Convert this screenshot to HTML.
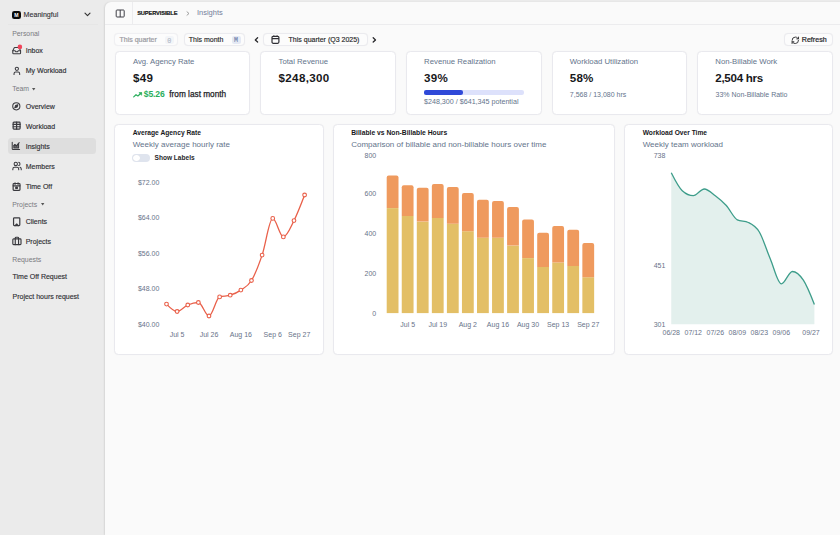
<!DOCTYPE html>
<html><head><meta charset="utf-8"><title>Insights</title>
<style>
html,body{margin:0;padding:0;width:840px;height:535px;overflow:hidden;background:#ebebeb;}
body{position:relative;font-family:"Liberation Sans", sans-serif;}
.t{position:absolute;white-space:nowrap;font-family:"Liberation Sans", sans-serif;}
</style></head><body>
<div style="position:absolute;left:0.00px;top:0.00px;width:840.00px;height:535.00px;background:#ebebeb"></div>
<div style="position:absolute;left:12.20px;top:10.50px;width:8.60px;height:8.60px;background:#0a0a0a;border-radius:2.3px"></div>
<div class="t" style="top:13.00px;font-size:5.2px;line-height:5.2px;color:#fff;font-weight:700;left:16.50px;transform:translateX(-50%);">M</div>
<div class="t" style="top:12.00px;font-size:7.1px;line-height:7.1px;color:#333338;font-weight:400;-webkit-text-stroke:0.12px #333338;left:23.60px;">Meaningful</div>
<svg style="position:absolute;left:84px;top:12px;overflow:visible;" width="7" height="5" viewBox="0 0 7 5"><path d="M1 1.2 L3.5 3.7 L6 1.2" fill="none" stroke="#333" stroke-width="1.15" stroke-linecap="round" stroke-linejoin="round"/></svg>
<div style="position:absolute;left:8.00px;top:24.20px;width:90.00px;height:0.60px;background:#e6e6e6"></div>
<div class="t" style="top:31.00px;font-size:6.9px;line-height:6.9px;color:#7a7a80;font-weight:400;left:12.20px;">Personal</div>
<div class="t" style="top:86.00px;font-size:6.9px;line-height:6.9px;color:#7a7a80;font-weight:400;left:12.20px;">Team</div>
<div class="t" style="top:202.00px;font-size:6.9px;line-height:6.9px;color:#7a7a80;font-weight:400;left:12.20px;">Projects</div>
<div class="t" style="top:257.00px;font-size:6.9px;line-height:6.9px;color:#7a7a80;font-weight:400;left:12.20px;">Requests</div>
<svg style="position:absolute;left:32.0px;top:87.8px;overflow:visible;" width="4" height="3" viewBox="0 0 4 3"><path d="M0 0 L3.4 0 L1.7 2.4 Z" fill="#555"/></svg>
<svg style="position:absolute;left:40.7px;top:202.8px;overflow:visible;" width="4" height="3" viewBox="0 0 4 3"><path d="M0 0 L3.4 0 L1.7 2.4 Z" fill="#555"/></svg>
<div style="position:absolute;left:8.20px;top:137.60px;width:87.80px;height:16.90px;background:#dedede;border-radius:3.5px"></div>
<div class="t" style="top:47.00px;font-size:7.0px;line-height:7.0px;color:#2e2e33;font-weight:400;-webkit-text-stroke:0.14px #2e2e33;left:25.70px;">Inbox</div>
<div class="t" style="top:67.00px;font-size:7.0px;line-height:7.0px;color:#2e2e33;font-weight:400;-webkit-text-stroke:0.14px #2e2e33;left:25.70px;">My Workload</div>
<div class="t" style="top:103.00px;font-size:7.0px;line-height:7.0px;color:#2e2e33;font-weight:400;-webkit-text-stroke:0.14px #2e2e33;left:25.70px;">Overview</div>
<div class="t" style="top:123.00px;font-size:7.0px;line-height:7.0px;color:#2e2e33;font-weight:400;-webkit-text-stroke:0.14px #2e2e33;left:25.70px;">Workload</div>
<div class="t" style="top:143.00px;font-size:7.0px;line-height:7.0px;color:#2e2e33;font-weight:400;-webkit-text-stroke:0.14px #2e2e33;left:25.70px;">Insights</div>
<div class="t" style="top:163.00px;font-size:7.0px;line-height:7.0px;color:#2e2e33;font-weight:400;-webkit-text-stroke:0.14px #2e2e33;left:25.70px;">Members</div>
<div class="t" style="top:183.00px;font-size:7.0px;line-height:7.0px;color:#2e2e33;font-weight:400;-webkit-text-stroke:0.14px #2e2e33;left:25.70px;">Time Off</div>
<div class="t" style="top:218.00px;font-size:7.0px;line-height:7.0px;color:#2e2e33;font-weight:400;-webkit-text-stroke:0.14px #2e2e33;left:25.70px;">Clients</div>
<div class="t" style="top:238.00px;font-size:7.0px;line-height:7.0px;color:#2e2e33;font-weight:400;-webkit-text-stroke:0.14px #2e2e33;left:25.70px;">Projects</div>
<div class="t" style="top:273.00px;font-size:7.0px;line-height:7.0px;color:#2e2e33;font-weight:400;-webkit-text-stroke:0.14px #2e2e33;left:12.50px;">Time Off Request</div>
<div class="t" style="top:293.00px;font-size:7.0px;line-height:7.0px;color:#2e2e33;font-weight:400;-webkit-text-stroke:0.14px #2e2e33;left:12.50px;">Project hours request</div>
<svg style="position:absolute;left:12.02px;top:46.32px;overflow:visible" width="9.36" height="9.36" viewBox="0 0 24 24"><g fill="none" stroke="#3a3a3f" stroke-linecap="round" stroke-linejoin="round" stroke-width="2.69"><polyline points="22 12 16 12 14 15 10 15 8 12 2 12"/><path d="M5.45 5.11 2 12v6a2 2 0 0 0 2 2h16a2 2 0 0 0 2-2v-6l-3.45-6.89A2 2 0 0 0 16.76 4H7.24a2 2 0 0 0-1.79 1.11z"/></g></svg>
<svg style="position:absolute;left:16.5px;top:43.7px" width="6" height="6"><circle cx="2.9" cy="2.9" r="2.3" fill="#f0445a"/></svg>
<svg style="position:absolute;left:11.74px;top:65.84px;overflow:visible" width="9.72" height="9.72" viewBox="0 0 24 24"><g fill="none" stroke="#3a3a3f" stroke-linecap="round" stroke-linejoin="round" stroke-width="2.59"><circle cx="12" cy="7" r="4"/><path d="M19 21v-2a4 4 0 0 0-4-4H9a4 4 0 0 0-4 4v2"/></g></svg>
<svg style="position:absolute;left:12.18px;top:101.88px;overflow:visible" width="8.64" height="8.64" viewBox="0 0 24 24"><g fill="none" stroke="#3a3a3f" stroke-linecap="round" stroke-linejoin="round" stroke-width="2.92"><circle cx="12" cy="12" r="10"/><polygon points="16.24 7.76 14.12 14.12 7.76 16.24 9.88 9.88 16.24 7.76" fill="#3a3a3f"/></g></svg>
<svg style="position:absolute;left:11.98px;top:121.38px;overflow:visible" width="9.24" height="9.24" viewBox="0 0 24 24"><g fill="none" stroke="#3a3a3f" stroke-linecap="round" stroke-linejoin="round" stroke-width="3.12"><rect x="3" y="3" width="18" height="18" rx="2"/><path d="M3 9h18M3 15h18M12 3v18"/></g></svg>
<svg style="position:absolute;left:11.48px;top:141.28px;overflow:visible" width="9.84" height="9.84" viewBox="0 0 24 24"><g fill="none" stroke="#3a3a3f" stroke-linecap="round" stroke-linejoin="round" stroke-width="2.56"><path d="M3 3v16a2 2 0 0 0 2 2h16"/><path d="M7 11.2 9.5 8.7 13 12.2 18.5 6.7V17H7z" fill="#3a3a3f" fill-opacity="0.7"/><path d="M7 11.2 9.5 8.7 13 12.2 20 4"/></g></svg>
<svg style="position:absolute;left:11.56px;top:160.76px;overflow:visible" width="10.08" height="10.08" viewBox="0 0 24 24"><g fill="none" stroke="#3a3a3f" stroke-linecap="round" stroke-linejoin="round" stroke-width="2.50"><path d="M16 21v-2a4 4 0 0 0-4-4H6a4 4 0 0 0-4 4v2"/><circle cx="9" cy="7" r="4"/><path d="M22 21v-2a4 4 0 0 0-3-3.87"/><path d="M16 3.13a4 4 0 0 1 0 7.75"/></g></svg>
<svg style="position:absolute;left:11.94px;top:181.64px;overflow:visible" width="9.12" height="9.12" viewBox="0 0 24 24"><g fill="none" stroke="#3a3a3f" stroke-linecap="round" stroke-linejoin="round" stroke-width="3.16"><rect x="3" y="4" width="18" height="18" rx="2"/><path d="M16 2v4M8 2v4M3 10h18"/><rect x="10" y="13.5" width="4" height="3.5" fill="#3a3a3f"/></g></svg>
<svg style="position:absolute;left:11.92px;top:216.62px;overflow:visible" width="9.36" height="9.36" viewBox="0 0 24 24"><g fill="none" stroke="#3a3a3f" stroke-linecap="round" stroke-linejoin="round" stroke-width="3.08"><rect x="4" y="2" width="16" height="20" rx="2"/><path d="M8 22 12 18 16 22"/></g></svg>
<svg style="position:absolute;left:11.58px;top:236.08px;overflow:visible" width="9.84" height="9.84" viewBox="0 0 24 24"><g fill="none" stroke="#3a3a3f" stroke-linecap="round" stroke-linejoin="round" stroke-width="2.80"><rect x="2" y="7" width="20" height="14" rx="2"/><path d="M16 21V5a2 2 0 0 0-2-2h-4a2 2 0 0 0-2 2v16"/></g></svg>
<div style="position:absolute;left:105.00px;top:2.00px;width:735.00px;height:533.00px;background:#fafafa;border-top-left-radius:6px;box-shadow:-0.3px 0 1.6px rgba(0,0,0,0.09)"></div>
<div style="position:absolute;left:105.00px;top:23.60px;width:735.00px;height:0.80px;background:#ececee"></div>
<div style="position:absolute;left:131.60px;top:2.00px;width:0.80px;height:22.00px;background:#ececee"></div>
<svg style="position:absolute;left:114.5px;top:8.5px;overflow:visible;" width="11" height="9" viewBox="0 0 11 9"><rect x="1.2" y="1.0" width="8.0" height="7.0" rx="0.8" fill="none" stroke="#3f3f46" stroke-width="1.0"/><path d="M5.2 1 V8" stroke="#3f3f46" stroke-width="1.0"/></svg>
<div class="t" style="top:11.00px;font-size:5.7px;line-height:5.7px;color:#111;font-weight:700;letter-spacing:-0.12px;-webkit-text-stroke:0.15px #111;left:137.20px;">SUPERVISIBLE</div>
<svg style="position:absolute;left:185.5px;top:10.5px;overflow:visible;" width="4" height="5" viewBox="0 0 4 5"><path d="M1 0.8 L3 2.5 L1 4.2" fill="none" stroke="#888" stroke-width="0.8" stroke-linecap="round"/></svg>
<div class="t" style="top:9.00px;font-size:7.5px;line-height:7.5px;color:#74809a;font-weight:400;left:196.90px;">Insights</div>
<div style="position:absolute;left:114.20px;top:33.10px;width:64.00px;height:13.30px;background:#fcfcfc;border:0.8px solid #f0f0f3;border-radius:4px;box-sizing:border-box;box-shadow:0 0 1px rgba(0,0,0,0.05)"></div>
<div class="t" style="top:36.00px;font-size:7px;line-height:7px;color:#9b9ba3;font-weight:400;-webkit-text-stroke:0.2px #9b9ba3;left:119.50px;">This quarter</div>
<div style="position:absolute;left:164.60px;top:35.50px;width:9.40px;height:8.60px;background:#f3f5f8;border-radius:2px"></div>
<div class="t" style="top:38.00px;font-size:6.8px;line-height:6.8px;color:#b0b7c6;font-weight:400;-webkit-text-stroke:0.1px #b0b7c6;left:169.20px;transform:translateX(-50%);font-family:'Liberation Mono',monospace">0</div>
<div style="position:absolute;left:183.50px;top:33.10px;width:61.80px;height:13.30px;background:#fcfcfc;border:0.8px solid #ebebef;border-radius:4px;box-sizing:border-box;box-shadow:0 0 1px rgba(0,0,0,0.05)"></div>
<div class="t" style="top:36.00px;font-size:7px;line-height:7px;color:#27272a;font-weight:400;-webkit-text-stroke:0.14px #27272a;left:188.80px;">This month</div>
<div style="position:absolute;left:231.50px;top:35.50px;width:9.40px;height:8.60px;background:#e4e9f4;border-radius:2px"></div>
<div class="t" style="top:38.00px;font-size:6.6px;line-height:6.6px;color:#7384aa;font-weight:400;-webkit-text-stroke:0.15px #7384aa;left:236.10px;transform:translateX(-50%);font-family:'Liberation Mono',monospace">M</div>
<svg style="position:absolute;left:254.3px;top:37px;overflow:visible;" width="5" height="6" viewBox="0 0 5 6"><path d="M3.6 0.8 L1.3 2.9 L3.6 5" fill="none" stroke="#27272a" stroke-width="1.3" stroke-linecap="round" stroke-linejoin="round"/></svg>
<div style="position:absolute;left:262.80px;top:33.10px;width:105.10px;height:13.30px;background:#fcfcfc;border:0.8px solid #ebebef;border-radius:4px;box-sizing:border-box;box-shadow:0 0 1px rgba(0,0,0,0.05)"></div>
<svg style="position:absolute;left:270.5px;top:35.2px;overflow:visible;" width="9" height="9" viewBox="0 0 9 9"><rect x="1" y="1.4" width="6.9" height="6.9" rx="1.2" fill="none" stroke="#303036" stroke-width="1.2"/><path d="M1 3.7 H7.9 M2.8 0.4 V2 M6.1 0.4 V2" stroke="#303036" stroke-width="1.2"/></svg>
<div class="t" style="top:36.00px;font-size:7px;line-height:7px;color:#27272a;font-weight:400;-webkit-text-stroke:0.15px #27272a;left:288.60px;">This quarter (Q3 2025)</div>
<svg style="position:absolute;left:371.5px;top:37px;overflow:visible;" width="5" height="6" viewBox="0 0 5 6"><path d="M1.2 0.8 L3.5 2.9 L1.2 5" fill="none" stroke="#27272a" stroke-width="1.3" stroke-linecap="round" stroke-linejoin="round"/></svg>
<div style="position:absolute;left:784.20px;top:33.10px;width:49.00px;height:13.30px;background:#fcfcfc;border:0.8px solid #ebebef;border-radius:4px;box-sizing:border-box;box-shadow:0 0 1px rgba(0,0,0,0.05)"></div>
<svg style="position:absolute;left:791.0px;top:35.6px;overflow:visible" width="8.6" height="8.6" viewBox="0 0 24 24"><g fill="none" stroke="#27272a" stroke-width="2.5" stroke-linecap="round" stroke-linejoin="round"><path d="M3 12a9 9 0 0 1 9-9 9.75 9.75 0 0 1 6.74 2.74L21 8"/><path d="M21 3v5h-5"/><path d="M21 12a9 9 0 0 1-9 9 9.75 9.75 0 0 1-6.74-2.74L3 16"/><path d="M8 16H3v5"/></g></svg>
<div class="t" style="top:37.00px;font-size:7.1px;line-height:7.1px;color:#27272a;font-weight:400;-webkit-text-stroke:0.22px #27272a;left:801.80px;">Refresh</div>
<div style="position:absolute;left:114.60px;top:51.20px;width:135.80px;height:63.60px;background:#fff;border:0.9px solid #e9e9ee;border-radius:4.5px;box-sizing:border-box;box-shadow:0 0 1.2px rgba(0,0,0,0.05)"></div>
<div style="position:absolute;left:260.30px;top:51.20px;width:135.80px;height:63.60px;background:#fff;border:0.9px solid #e9e9ee;border-radius:4.5px;box-sizing:border-box;box-shadow:0 0 1.2px rgba(0,0,0,0.05)"></div>
<div style="position:absolute;left:405.90px;top:51.20px;width:135.80px;height:63.60px;background:#fff;border:0.9px solid #e9e9ee;border-radius:4.5px;box-sizing:border-box;box-shadow:0 0 1.2px rgba(0,0,0,0.05)"></div>
<div style="position:absolute;left:551.60px;top:51.20px;width:135.80px;height:63.60px;background:#fff;border:0.9px solid #e9e9ee;border-radius:4.5px;box-sizing:border-box;box-shadow:0 0 1.2px rgba(0,0,0,0.05)"></div>
<div style="position:absolute;left:697.30px;top:51.20px;width:135.80px;height:63.60px;background:#fff;border:0.9px solid #e9e9ee;border-radius:4.5px;box-sizing:border-box;box-shadow:0 0 1.2px rgba(0,0,0,0.05)"></div>
<div class="t" style="top:58.00px;font-size:7.75px;line-height:7.75px;color:#64748b;font-weight:400;left:132.90px;">Avg. Agency Rate</div>
<div class="t" style="top:72.00px;font-size:11.6px;line-height:11.6px;color:#18181b;font-weight:700;letter-spacing:0.35px;left:132.90px;">$49</div>
<div class="t" style="top:58.00px;font-size:7.75px;line-height:7.75px;color:#64748b;font-weight:400;left:278.50px;">Total Revenue</div>
<div class="t" style="top:72.00px;font-size:11.6px;line-height:11.6px;color:#18181b;font-weight:700;letter-spacing:0.35px;left:278.50px;">$248,300</div>
<div class="t" style="top:58.00px;font-size:7.75px;line-height:7.75px;color:#64748b;font-weight:400;left:424.10px;">Revenue Realization</div>
<div class="t" style="top:72.00px;font-size:11.6px;line-height:11.6px;color:#18181b;font-weight:700;letter-spacing:0.25px;left:424.10px;">39%</div>
<div class="t" style="top:58.00px;font-size:7.75px;line-height:7.75px;color:#64748b;font-weight:400;left:569.70px;">Workload Utilization</div>
<div class="t" style="top:72.00px;font-size:11.6px;line-height:11.6px;color:#18181b;font-weight:700;letter-spacing:0.25px;left:569.70px;">58%</div>
<div class="t" style="top:58.00px;font-size:7.75px;line-height:7.75px;color:#64748b;font-weight:400;left:715.30px;">Non-Billable Work</div>
<div class="t" style="top:72.00px;font-size:11.6px;line-height:11.6px;color:#18181b;font-weight:700;letter-spacing:-0.3px;left:715.30px;">2,504 hrs</div>
<svg style="position:absolute;left:132.5px;top:92px;overflow:visible;" width="10" height="6" viewBox="0 0 10 6"><path d="M0.7 4.9 L3.0 2.7 L4.9 4.0 L8.2 1.0" fill="none" stroke="#2aae5c" stroke-width="1.2" stroke-linecap="round" stroke-linejoin="round"/><path d="M5.9 0.6 H8.7 V3.3 Z" fill="#2aae5c" stroke="#2aae5c" stroke-width="0.6" stroke-linejoin="round"/></svg>
<div class="t" style="top:90.00px;font-size:8.6px;line-height:8.6px;color:#2aae5c;font-weight:700;letter-spacing:-0.15px;left:143.80px;">$5.26</div>
<div class="t" style="top:91.00px;font-size:8.25px;line-height:8.25px;color:#222226;font-weight:400;-webkit-text-stroke:0.25px #222226;left:169.30px;">from last month</div>
<div style="position:absolute;left:424.00px;top:90.40px;width:100.00px;height:4.20px;background:#dde1fb;border-radius:2.1px"></div>
<div style="position:absolute;left:424.00px;top:90.40px;width:39.00px;height:4.20px;background:#2f49d8;border-radius:2.1px"></div>
<div class="t" style="top:99.00px;font-size:7.15px;line-height:7.15px;color:#64748b;font-weight:400;left:424.00px;">$248,300 / $641,345 potential</div>
<div class="t" style="top:91.00px;font-size:7px;line-height:7px;color:#64748b;font-weight:400;left:569.80px;">7,568 / 13,080 hrs</div>
<div class="t" style="top:91.00px;font-size:7px;line-height:7px;color:#64748b;font-weight:400;left:715.50px;">33% Non-Billable Ratio</div>
<div style="position:absolute;left:114.30px;top:124.30px;width:209.90px;height:230.50px;background:#fff;border:0.9px solid #e9e9ee;border-radius:4.5px;box-sizing:border-box;box-shadow:0 0 1.2px rgba(0,0,0,0.05)"></div>
<div style="position:absolute;left:333.40px;top:124.30px;width:281.40px;height:230.50px;background:#fff;border:0.9px solid #e9e9ee;border-radius:4.5px;box-sizing:border-box;box-shadow:0 0 1.2px rgba(0,0,0,0.05)"></div>
<div style="position:absolute;left:624.40px;top:124.30px;width:208.80px;height:230.50px;background:#fff;border:0.9px solid #e9e9ee;border-radius:4.5px;box-sizing:border-box;box-shadow:0 0 1.2px rgba(0,0,0,0.05)"></div>
<div class="t" style="top:130.00px;font-size:6.7px;line-height:6.7px;color:#18181b;font-weight:700;left:132.70px;">Average Agency Rate</div>
<div class="t" style="top:141.00px;font-size:8px;line-height:8px;color:#64748b;font-weight:400;left:132.70px;">Weekly average hourly rate</div>
<div style="position:absolute;left:132.30px;top:153.60px;width:17.80px;height:8.30px;background:#dfe4ee;border-radius:4.2px"></div>
<div style="position:absolute;left:133.20px;top:154.50px;width:6.50px;height:6.50px;background:#fff;border-radius:50%;box-shadow:0 0 0.6px rgba(0,0,0,0.15)"></div>
<div class="t" style="top:155.00px;font-size:6.55px;line-height:6.55px;color:#27272a;font-weight:700;left:154.60px;">Show Labels</div>
<div class="t" style="top:130.00px;font-size:6.75px;line-height:6.75px;color:#18181b;font-weight:700;left:351.20px;">Billable vs Non-Billable Hours</div>
<div class="t" style="top:141.00px;font-size:8px;line-height:8px;color:#64748b;font-weight:400;left:351.20px;">Comparison of billable and non-billable hours over time</div>
<div class="t" style="top:130.00px;font-size:6.65px;line-height:6.65px;color:#18181b;font-weight:700;left:642.70px;">Workload Over Time</div>
<div class="t" style="top:141.00px;font-size:8px;line-height:8px;color:#64748b;font-weight:400;left:642.70px;">Weekly team workload</div>
<svg style="position:absolute;left:0px;top:0px;overflow:visible;pointer-events:none" width="840" height="535" viewBox="0 0 840 535"><path d="M166.50,304.10 C170.04,307.80 173.58,311.50 177.12,311.50 C180.66,311.50 184.21,306.50 187.75,305.00 C191.29,303.50 194.83,302.50 198.37,302.50 C201.91,302.50 205.45,316.00 208.99,316.00 C212.53,316.00 216.07,298.03 219.62,296.90 C223.16,295.77 226.70,296.33 230.24,295.20 C233.78,294.07 237.32,292.55 240.86,290.10 C244.40,287.65 247.94,286.33 251.48,280.50 C255.02,274.67 258.57,265.45 262.11,255.10 C265.65,244.75 269.19,218.40 272.73,218.40 C276.27,218.40 279.81,236.90 283.35,236.90 C286.89,236.90 290.44,227.58 293.98,220.60 C297.52,213.62 301.06,204.31 304.60,195.00" fill="none" stroke="#e9604a" stroke-width="1.3"/><circle cx="166.50" cy="304.10" r="1.85" fill="#fff" stroke="#e9604a" stroke-width="1.1"/><circle cx="177.12" cy="311.50" r="1.85" fill="#fff" stroke="#e9604a" stroke-width="1.1"/><circle cx="187.75" cy="305.00" r="1.85" fill="#fff" stroke="#e9604a" stroke-width="1.1"/><circle cx="198.37" cy="302.50" r="1.85" fill="#fff" stroke="#e9604a" stroke-width="1.1"/><circle cx="208.99" cy="316.00" r="1.85" fill="#fff" stroke="#e9604a" stroke-width="1.1"/><circle cx="219.62" cy="296.90" r="1.85" fill="#fff" stroke="#e9604a" stroke-width="1.1"/><circle cx="230.24" cy="295.20" r="1.85" fill="#fff" stroke="#e9604a" stroke-width="1.1"/><circle cx="240.86" cy="290.10" r="1.85" fill="#fff" stroke="#e9604a" stroke-width="1.1"/><circle cx="251.48" cy="280.50" r="1.85" fill="#fff" stroke="#e9604a" stroke-width="1.1"/><circle cx="262.11" cy="255.10" r="1.85" fill="#fff" stroke="#e9604a" stroke-width="1.1"/><circle cx="272.73" cy="218.40" r="1.85" fill="#fff" stroke="#e9604a" stroke-width="1.1"/><circle cx="283.35" cy="236.90" r="1.85" fill="#fff" stroke="#e9604a" stroke-width="1.1"/><circle cx="293.98" cy="220.60" r="1.85" fill="#fff" stroke="#e9604a" stroke-width="1.1"/><circle cx="304.60" cy="195.00" r="1.85" fill="#fff" stroke="#e9604a" stroke-width="1.1"/></svg>
<div class="t" style="top:179.00px;font-size:7px;line-height:7px;color:#687389;font-weight:400;right:680.70px;">$72.00</div>
<div class="t" style="top:214.00px;font-size:7px;line-height:7px;color:#687389;font-weight:400;right:680.70px;">$64.00</div>
<div class="t" style="top:250.00px;font-size:7px;line-height:7px;color:#687389;font-weight:400;right:680.70px;">$56.00</div>
<div class="t" style="top:285.00px;font-size:7px;line-height:7px;color:#687389;font-weight:400;right:680.70px;">$48.00</div>
<div class="t" style="top:321.00px;font-size:7px;line-height:7px;color:#687389;font-weight:400;right:680.70px;">$40.00</div>
<div class="t" style="top:331.00px;font-size:7px;line-height:7px;color:#687389;font-weight:400;left:177.12px;transform:translateX(-50%);">Jul 5</div>
<div class="t" style="top:331.00px;font-size:7px;line-height:7px;color:#687389;font-weight:400;left:208.99px;transform:translateX(-50%);">Jul 26</div>
<div class="t" style="top:331.00px;font-size:7px;line-height:7px;color:#687389;font-weight:400;left:240.86px;transform:translateX(-50%);">Aug 16</div>
<div class="t" style="top:331.00px;font-size:7px;line-height:7px;color:#687389;font-weight:400;left:272.73px;transform:translateX(-50%);">Sep 6</div>
<div class="t" style="top:331.00px;font-size:7px;line-height:7px;color:#687389;font-weight:400;left:299.20px;transform:translateX(-50%);">Sep 27</div>
<svg style="position:absolute;left:0px;top:0px;overflow:visible;pointer-events:none" width="840" height="535" viewBox="0 0 840 535"><rect x="386.70" y="208.10" width="11.8" height="105.00" fill="#e3bf66"/><path d="M386.70,208.10 V177.60 Q386.70,175.60 388.70,175.60 H396.50 Q398.50,175.60 398.50,177.60 V208.10 Z" fill="#ef9a5e"/><rect x="401.75" y="216.00" width="11.8" height="97.10" fill="#e3bf66"/><path d="M401.75,216.00 V187.25 Q401.75,185.25 403.75,185.25 H411.55 Q413.55,185.25 413.55,187.25 V216.00 Z" fill="#ef9a5e"/><rect x="416.80" y="221.60" width="11.8" height="91.50" fill="#e3bf66"/><path d="M416.80,221.60 V189.75 Q416.80,187.75 418.80,187.75 H426.60 Q428.60,187.75 428.60,189.75 V221.60 Z" fill="#ef9a5e"/><rect x="431.85" y="217.90" width="11.8" height="95.20" fill="#e3bf66"/><path d="M431.85,217.90 V186.00 Q431.85,184.00 433.85,184.00 H441.65 Q443.65,184.00 443.65,186.00 V217.90 Z" fill="#ef9a5e"/><rect x="446.90" y="223.75" width="11.8" height="89.35" fill="#e3bf66"/><path d="M446.90,223.75 V188.90 Q446.90,186.90 448.90,186.90 H456.70 Q458.70,186.90 458.70,188.90 V223.75 Z" fill="#ef9a5e"/><rect x="461.95" y="231.25" width="11.8" height="81.85" fill="#e3bf66"/><path d="M461.95,231.25 V194.90 Q461.95,192.90 463.95,192.90 H471.75 Q473.75,192.90 473.75,194.90 V231.25 Z" fill="#ef9a5e"/><rect x="477.00" y="237.75" width="11.8" height="75.35" fill="#e3bf66"/><path d="M477.00,237.75 V201.75 Q477.00,199.75 479.00,199.75 H486.80 Q488.80,199.75 488.80,201.75 V237.75 Z" fill="#ef9a5e"/><rect x="492.05" y="237.75" width="11.8" height="75.35" fill="#e3bf66"/><path d="M492.05,237.75 V203.00 Q492.05,201.00 494.05,201.00 H501.85 Q503.85,201.00 503.85,203.00 V237.75 Z" fill="#ef9a5e"/><rect x="507.10" y="245.60" width="11.8" height="67.50" fill="#e3bf66"/><path d="M507.10,245.60 V208.90 Q507.10,206.90 509.10,206.90 H516.90 Q518.90,206.90 518.90,208.90 V245.60 Z" fill="#ef9a5e"/><rect x="522.15" y="258.10" width="11.8" height="55.00" fill="#e3bf66"/><path d="M522.15,258.10 V221.40 Q522.15,219.40 524.15,219.40 H531.95 Q533.95,219.40 533.95,221.40 V258.10 Z" fill="#ef9a5e"/><rect x="537.20" y="266.90" width="11.8" height="46.20" fill="#e3bf66"/><path d="M537.20,266.90 V234.75 Q537.20,232.75 539.20,232.75 H547.00 Q549.00,232.75 549.00,234.75 V266.90 Z" fill="#ef9a5e"/><rect x="552.25" y="262.50" width="11.8" height="50.60" fill="#e3bf66"/><path d="M552.25,262.50 V228.00 Q552.25,226.00 554.25,226.00 H562.05 Q564.05,226.00 564.05,228.00 V262.50 Z" fill="#ef9a5e"/><rect x="567.30" y="266.00" width="11.8" height="47.10" fill="#e3bf66"/><path d="M567.30,266.00 V231.75 Q567.30,229.75 569.30,229.75 H577.10 Q579.10,229.75 579.10,231.75 V266.00 Z" fill="#ef9a5e"/><rect x="582.35" y="277.25" width="11.8" height="35.85" fill="#e3bf66"/><path d="M582.35,277.25 V245.10 Q582.35,243.10 584.35,243.10 H592.15 Q594.15,243.10 594.15,245.10 V277.25 Z" fill="#ef9a5e"/></svg>
<div class="t" style="top:152.00px;font-size:7px;line-height:7px;color:#687389;font-weight:400;right:463.80px;">800</div>
<div class="t" style="top:190.00px;font-size:7px;line-height:7px;color:#687389;font-weight:400;right:463.80px;">600</div>
<div class="t" style="top:230.00px;font-size:7px;line-height:7px;color:#687389;font-weight:400;right:463.80px;">400</div>
<div class="t" style="top:270.00px;font-size:7px;line-height:7px;color:#687389;font-weight:400;right:463.80px;">200</div>
<div class="t" style="top:310.00px;font-size:7px;line-height:7px;color:#687389;font-weight:400;right:463.80px;">0</div>
<div class="t" style="top:321.00px;font-size:7px;line-height:7px;color:#687389;font-weight:400;left:407.65px;transform:translateX(-50%);">Jul 5</div>
<div class="t" style="top:321.00px;font-size:7px;line-height:7px;color:#687389;font-weight:400;left:437.75px;transform:translateX(-50%);">Jul 19</div>
<div class="t" style="top:321.00px;font-size:7px;line-height:7px;color:#687389;font-weight:400;left:467.85px;transform:translateX(-50%);">Aug 2</div>
<div class="t" style="top:321.00px;font-size:7px;line-height:7px;color:#687389;font-weight:400;left:497.95px;transform:translateX(-50%);">Aug 16</div>
<div class="t" style="top:321.00px;font-size:7px;line-height:7px;color:#687389;font-weight:400;left:528.05px;transform:translateX(-50%);">Aug 30</div>
<div class="t" style="top:321.00px;font-size:7px;line-height:7px;color:#687389;font-weight:400;left:558.15px;transform:translateX(-50%);">Sep 13</div>
<div class="t" style="top:321.00px;font-size:7px;line-height:7px;color:#687389;font-weight:400;left:588.25px;transform:translateX(-50%);">Sep 27</div>
<svg style="position:absolute;left:0px;top:0px;overflow:visible;pointer-events:none" width="840" height="535" viewBox="0 0 840 535"><path d="M671.25,172.70 C674.92,180.03 678.59,187.37 682.26,190.70 C685.93,194.03 689.60,195.70 693.27,195.70 C696.94,195.70 700.61,189.00 704.28,189.00 C707.95,189.00 711.62,192.95 715.29,195.70 C718.96,198.45 722.63,201.48 726.30,205.50 C729.97,209.52 733.64,218.00 737.31,219.80 C740.98,221.60 744.65,220.70 748.32,222.50 C751.99,224.30 755.66,225.92 759.33,232.00 C763.00,238.08 766.67,250.35 770.34,259.00 C774.01,267.65 777.68,283.90 781.35,283.90 C785.02,283.90 788.69,271.50 792.36,271.50 C796.03,271.50 799.70,274.70 803.37,280.20 C807.04,285.70 810.71,295.10 814.38,304.50 L814.38,324.2 L671.25,324.2 Z" fill="#e3f0ed"/><path d="M671.25,172.70 C674.92,180.03 678.59,187.37 682.26,190.70 C685.93,194.03 689.60,195.70 693.27,195.70 C696.94,195.70 700.61,189.00 704.28,189.00 C707.95,189.00 711.62,192.95 715.29,195.70 C718.96,198.45 722.63,201.48 726.30,205.50 C729.97,209.52 733.64,218.00 737.31,219.80 C740.98,221.60 744.65,220.70 748.32,222.50 C751.99,224.30 755.66,225.92 759.33,232.00 C763.00,238.08 766.67,250.35 770.34,259.00 C774.01,267.65 777.68,283.90 781.35,283.90 C785.02,283.90 788.69,271.50 792.36,271.50 C796.03,271.50 799.70,274.70 803.37,280.20 C807.04,285.70 810.71,295.10 814.38,304.50" fill="none" stroke="#3d9d8a" stroke-width="1.3"/></svg>
<div class="t" style="top:152.00px;font-size:7px;line-height:7px;color:#687389;font-weight:400;right:174.70px;">738</div>
<div class="t" style="top:262.00px;font-size:7px;line-height:7px;color:#687389;font-weight:400;right:174.70px;">451</div>
<div class="t" style="top:321.00px;font-size:7px;line-height:7px;color:#687389;font-weight:400;right:174.70px;">301</div>
<div class="t" style="top:329.00px;font-size:7px;line-height:7px;color:#687389;font-weight:400;left:671.25px;transform:translateX(-50%);">06/28</div>
<div class="t" style="top:329.00px;font-size:7px;line-height:7px;color:#687389;font-weight:400;left:693.27px;transform:translateX(-50%);">07/12</div>
<div class="t" style="top:329.00px;font-size:7px;line-height:7px;color:#687389;font-weight:400;left:715.29px;transform:translateX(-50%);">07/26</div>
<div class="t" style="top:329.00px;font-size:7px;line-height:7px;color:#687389;font-weight:400;left:737.31px;transform:translateX(-50%);">08/09</div>
<div class="t" style="top:329.00px;font-size:7px;line-height:7px;color:#687389;font-weight:400;left:759.33px;transform:translateX(-50%);">08/23</div>
<div class="t" style="top:329.00px;font-size:7px;line-height:7px;color:#687389;font-weight:400;left:781.35px;transform:translateX(-50%);">09/06</div>
<div class="t" style="top:329.00px;font-size:7px;line-height:7px;color:#687389;font-weight:400;left:811.00px;transform:translateX(-50%);">09/27</div>
</body></html>
